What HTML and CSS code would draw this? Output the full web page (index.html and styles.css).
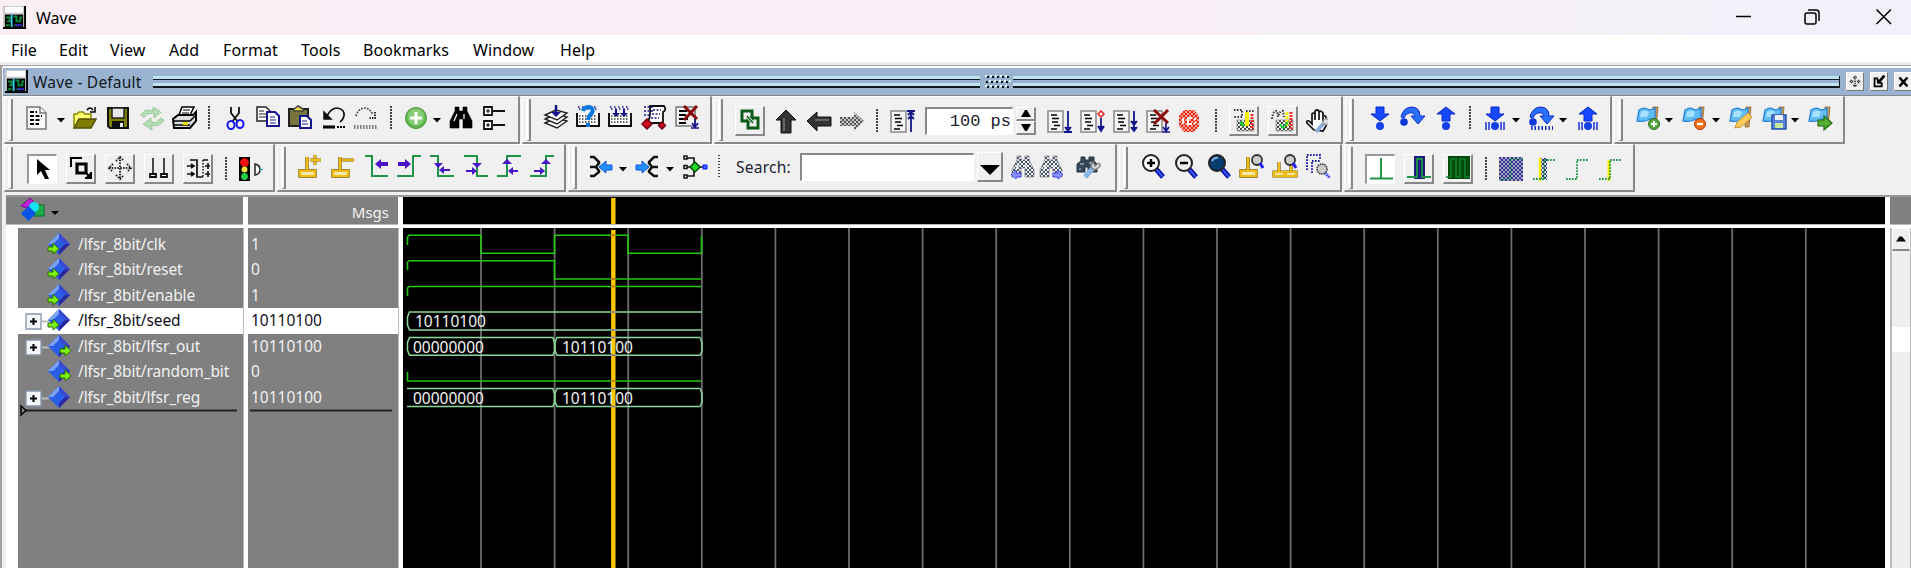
FILE: index.html
```html
<!DOCTYPE html>
<html lang="en">
<head>
<meta charset="utf-8">
<title>Wave</title>
<link rel="stylesheet" href="styles.css">
</head>
<body>
<div class="window">
  <header class="titlebar">
    <svg class="app-icon" viewBox="0 0 24 24"><rect width="24" height="24" fill="#000"/><path d="M0 0H22V22H0z" fill="#c8c8c8"/><path d="M2 1H21V7H2z" fill="#fff"/><path d="M2 9H21V22H2z" fill="#000"/><path d="M3 12H7V16H4M11 11H14V16H18V12H20M3 20H7M12 20H15" fill="none" stroke="#0a8a3c" stroke-width="2"/><path d="M9 9V22" stroke="#37c8e8" stroke-width="2"/><path d="M13 20H20" stroke="#3a2ad0" stroke-width="2"/></svg>
    <span class="title">Wave</span>
    <svg class="win-controls" viewBox="0 0 164 20"><g fill="none" stroke="#000" stroke-width="1.5"><path d="M0 10.5H15"/><rect x="69" y="7" width="11" height="11" rx="2"/><path d="M72 4H80Q83 4 83 7V15"/><path d="M140.500 3.500L155 18M155 3.500L140.500 18"/></g></svg>
  </header>
  <nav class="menu">
    <span class="m-file">File</span><span class="m-edit">Edit</span><span class="m-view">View</span><span class="m-add">Add</span><span class="m-format">Format</span><span class="m-tools">Tools</span><span class="m-book">Bookmarks</span><span class="m-window">Window</span><span class="m-help">Help</span>
  </nav>
  <section class="pane">
    <div class="pane-title">
      <svg class="app-icon" viewBox="0 0 24 24"><rect width="24" height="24" fill="#000"/><path d="M0 0H22V22H0z" fill="#c8c8c8"/><path d="M2 1H21V7H2z" fill="#fff"/><path d="M2 9H21V22H2z" fill="#000"/><path d="M3 12H7V16H4M11 11H14V16H18V12H20M3 20H7M12 20H15" fill="none" stroke="#0a8a3c" stroke-width="2"/><path d="M9 9V22" stroke="#37c8e8" stroke-width="2"/><path d="M13 20H20" stroke="#3a2ad0" stroke-width="2"/></svg>
      <span class="pane-name">Wave - Default</span>
      <div class="rails rails-left"></div>
      <svg class="dots" viewBox="0 0 33 14"><defs><pattern id="dt" width="5" height="5" patternUnits="userSpaceOnUse"><path d="M0 0h2v2h-2z" fill="#dff"/><path d="M2 1h2v2h-2z" fill="#111"/></pattern></defs><path d="M4 0H29V4H4zM4 10H29V14H4z" fill="url(#dt)"/><path d="M2 0H27V4H2z" fill="url(#dt)" transform="translate(4 5)"/></svg>
      <div class="rails rails-right"></div>
      <svg class="pbtn" viewBox="0 0 18 19"><path d="M9 3V16M3 9.500H15M7 5H11M7 14H11M5 7.500V11.500M13 7.500V11.500" stroke="#222" stroke-width="1.500" stroke-dasharray="1.500 1.200"/></svg>
      <svg class="pbtn" viewBox="0 0 18 19"><path d="M8 6H4V15H12V11" fill="none" stroke="#000" stroke-width="2"/><path d="M15 3L9 10" stroke="#000" stroke-width="3"/><path d="M6 5L7 12L14 12z"/></svg>
      <svg class="pbtn" viewBox="0 0 18 19"><path d="M5 5L14 15M14 5L5 15" stroke="#000" stroke-width="2.800"/></svg>
    </div>
    <div class="toolrow" id="row1"></div>
    <div class="toolrow" id="row2"></div>
    <div class="wave">
      <div class="col names">
        <div class="head"><svg class="shapes" viewBox="0 0 40 26"><path d="M1 9L10 1L15 6L7 11z" fill="#c020d8" stroke="#701080"/><path d="M15 8H24V19H13z" fill="#1fae4c" stroke="#087028"/><circle cx="14" cy="10" r="5" fill="#12e2f4"/><path d="M8.500 9L16 16.500L8.500 24L1 16.500z" fill="#0a52e8"/><path d="M31 14H39L35 18z"/></svg></div>
        <div class="list" id="names"></div>
      </div>
      <div class="col values">
        <div class="head msgs">Msgs</div>
        <div class="list" id="values"></div>
      </div>
      <div class="col plot">
        <div class="head black"><svg viewBox="0 0 1482 27" class="cursor-head"><path d="M210.300 1V27" stroke="#ffc800" stroke-width="4.400"/></svg></div>
        <svg class="canvas" id="canvas" viewBox="403 228 1482 340"></svg>
      </div>
      <div class="col scroll">
        <div class="head"></div>
        <div class="track"><div class="up"><svg viewBox="0 0 10 6"><path d="M0 5.500L3.500 0.500H6L10 5.500z"/></svg></div><div class="slot"></div></div>
      </div>
    </div>
  </section>
</div>
<script src="app.js"></script>
</body>
</html>
```

FILE: styles.css
```css
* { box-sizing: border-box; }
body { margin: 0; overflow: hidden; background: #fff; font-family: "Noto Sans", "Open Sans", sans-serif; }
svg { display: block; flex: none; }
.window { width: 1911px; height: 568px; display: flex; flex-direction: column; overflow: hidden; }

.titlebar { height: 35px; flex: none; display: flex; align-items: center; padding-left: 3px; background: linear-gradient(90deg, #f9eff5 0, #f9eef5 55%, #f1f1fa 100%); }
.app-icon { width: 23px; height: 23px; }
.title { margin-left: 10px; font-size: 16px; line-height: 36px; }
.win-controls { width: 164px; height: 20px; margin-left: auto; margin-right: 11px; margin-bottom: 3px; }

.menu { height: 27px; flex: none; display: flex; padding-left: 11px; font-size: 16px; letter-spacing: 0.1px; line-height: 31px; white-space: nowrap; }
.m-file { width: 48px; } .m-edit { width: 51px; } .m-view { width: 59px; } .m-add { width: 54px; }
.m-format { width: 78px; } .m-tools { width: 62px; } .m-book { width: 110px; } .m-window { width: 87px; }

.pane { flex: 1; display: flex; flex-direction: column; min-height: 0; padding-left: 3px; border-top: 3px solid #eee; background: #f0f0f0; box-shadow: inset 2px 2px 0 #a0a0a0; }
.pane-title { height: 30px; flex: none; margin-top: 1px; display: flex; align-items: center; background: #99b3d1; border-top: 2px solid #fff; border-bottom: 1px solid #888; padding: 0 0 0 2px; overflow: hidden; }
.pane-name { margin-left: 5px; width: 120px; flex: none; font-size: 15.500px; letter-spacing: 0.2px; line-height: 24px; color: #101820; white-space: nowrap; }
.rails { height: 12px; flex: none; background: linear-gradient(#bfe3f0 0 3px, #101820 3px 4.500px, transparent 4.500px 7.500px, #bfe3f0 7.500px 10.500px, #101820 10.500px 12px); border-right: 1px solid #101820; }
.rails-left { width: 827px; border-right: 0; }
.rails-right { width: 827px; margin-right: 6px; }
.dots { width: 33px; height: 14px; }
.pbtn { width: 18px; height: 19px; background: #f0f0f0; border-right: 1px solid #777; border-bottom: 1px solid #777; border-top: 1px solid #fff; border-left: 1px solid #fff; margin-right: 6px; }

.toolrow { height: 48px; flex: none; display: flex; gap: 2px; padding-left: 1px; }
.toolbar { height: 48px; display: flex; align-items: center; flex: none; border: 1px solid #fff; border-right: 2px solid #888; border-bottom: 2px solid #888; }
.grip { width: 5px; height: 42px; flex: none; margin-left: 3px; border-left: 2px solid #fff; border-right: 2px solid #888; border-bottom: 1px solid #888; }
.cell { flex: none; display: flex; align-items: center; justify-content: center; }
.cell svg { width: 24px; height: 24px; }
.cell.menu-arrow svg { width: 8px; height: 24px; }
.cell.sep { height: 24px; background: repeating-linear-gradient(#444 0 1.500px, transparent 1.500px 3px); }
.cell.raised { height: 30px; border: 1px solid #fff; border-right: 2px solid #888; border-bottom: 2px solid #888; }
.cell.pressed { height: 30px; background: #fff; border: 1px solid #fff; border-top: 2px solid #999; border-left: 2px solid #999; }
.cell.field { height: 28px; background: #fff; border: 1px solid #fff; border-top: 2px solid #888; border-left: 2px solid #888; justify-content: flex-end; padding-right: 1px; font-family: "Liberation Mono", monospace; font-size: 17px; color: #223; }
.cell.label { font-size: 15.500px; letter-spacing: 0.25px; color: #223; justify-content: flex-start; }
.cell.spin { height: 28px; flex-direction: column; }
.cell.spin i { width: 100%; height: 14px; display: flex; align-items: center; justify-content: center; border: 1px solid #fff; border-right: 2px solid #888; border-bottom: 2px solid #888; }
.cell.spin svg { width: 12px; height: 9px; }

.wave { flex: 1; min-height: 0; display: flex; margin: 3px 0 0 3px; border-top: 2px solid #999; background: #fff; }
.col { display: flex; flex-direction: column; flex: none; }
.head { height: 27px; flex: none; background: #808080; margin-bottom: 4px; box-shadow: 0 1px 0 #bbb; }
.names { width: 237px; margin-right: 5px; }
.values { width: 150px; margin-right: 5px; }
.plot { width: 1482px; margin-right: 5px; }
.scroll { width: 21px; }
.names .list { margin-left: 12px; }
.list { flex: 1; background: #808080; padding-top: 3.500px; box-shadow: 1px 0 0 #bbb; }
.shapes { width: 40px; height: 26px; margin-left: 14px; }
.msgs { color: #f4f4f4; font-size: 15px; text-align: right; padding-right: 9px; line-height: 31px; }
.sig { height: 25.500px; display: flex; align-items: center; color: #f0f0f0; font-size: 15.500px; line-height: 24px; white-space: nowrap; }
.sig span { margin-left: 7px; letter-spacing: -0.1px; margin-top: -1px; }
.sig svg { width: 46px; height: 25px; margin-left: 7px; }
.values .sig span { margin-left: 3px; letter-spacing: 0; }
.sig.on { background: #fff; color: #101020; }
.endline { height: 8px; }
.endline svg { height: 8px; width: 220px; }
.values .endline svg { width: 150px; }
.black { background: #000; }
.cursor-head { width: 1482px; height: 27px; }
.canvas { width: 1482px; height: 340px; background: #000; }
.canvas text { font: 15.500px "Noto Sans", sans-serif; fill: #f0f4f0; }
.track { flex: 1; background: #efefef; border-left: 2px solid #bbb; border-right: 1px solid #bbb; }
.up { height: 23px; display: flex; align-items: center; justify-content: center; border: 1px solid #fff; border-bottom: 2px solid #888; }
.up svg { width: 10px; height: 6px; }
.slot { height: 25px; margin-top: 76px; background: #fff; }
```

FILE: app.js
```javascript
const P = (d, fill = 'none', stroke = 'none', w = 1.5, extra = '') =>
  `<path d="${d}" fill="${fill}" stroke="${stroke}" stroke-width="${w}" ${extra}/>`;
const NAVY = '#14148c', GREEN = '#1e9448', VIOLET = '#4a14c8', GOLD = '#f0bc10';
const docBase = P('M1 2H16V23H1z', '#f6f6f6', '#888') + P('M4 6H10M5 9.500H12M5 13H11M7 16.500H13M4 20H10', 'none', '#000', 1.7);
const checker = c => `<pattern id="ck${c.slice(1)}" width="4" height="4" patternUnits="userSpaceOnUse"><path d="M0 0h2v2h-2zM2 2h2v2h-2z" fill="${c}"/></pattern>`;
const ck = c => `url(#ck${c.slice(1)})`;
const flag = P('M17 1L22 1L20 21H16z', '#c89858', '#8a6230', .8) +
  P('M3 4Q8 1 11 3T19 2V14Q15 12 12 14T1 15z', '#62bdf5', '#2a86d8', 1.3) + P('M5 6Q9 3 13 6L11 11H4z', '#a8e0ff');
const pin = (x, y) => P(`M${x} ${y}v14M${x - 7} ${y + 14}h15v5h-15z`, 'none', '#806000', 3.4) + P(`M${x} ${y}v14M${x - 7} ${y + 14}h15v5h-15z`, '#f4e8b0', GOLD, 2.2);
const blueDown = P('M8 1H16V8H21L12 15L3 8H8z', '#1648ff', '#0a28c8', 1);
const blueUp = P('M8 15H16V8H21L12 1L3 8H8z', '#1648ff', '#0a28c8', 1);
const curve = P('M1 11Q3 2 11 1Q20 1 20 10H25L18 18L11 10H15Q14 6 9 7Q5 8 4 12z', '#2a70ff', '#0a28c8', 1) + '<circle cx="4" cy="16" r="3.800" fill="#0a38d8"/>';
const bars = P('M3 16V24M6 16V24M18 16V24M21 16V24', 'none', '#1430d8', 1.5);
const ball = '<circle cx="12" cy="20" r="4" fill="#1640e8"/>';
const glass = (f, s) => P('M15 15L22 23', 'none', '#0a0aa0', 5) + P('M15 15L22 23', 'none', '#3858f0', 2) +
  `<circle cx="10" cy="9" r="8" fill="${f}" stroke="#222" stroke-width="2"/>` + s;
const binoc = (f, s = f) => P('M6 1H10V5H14V1H18V5L23 15V22H14V13H10V22H1V15L6 5z', f, s, .6) + P('M8 8L5 15M15 8V13', 'none', '#fff', 1.2);
const left = (x, y) => P(`M${x} ${y}l6 -5v3h7v4h-7v3z`, VIOLET);
const right = (x, y) => P(`M${x} ${y}l-6 -5v3h-7v4h7v3z`, VIOLET);

const icons = {
  doc: P('M2 1H15L21 7V23H2z', '#f8f8f8', '#777') + P('M15 1V7H21', '#fff', '#777') + P('M5 6H12M5 10H17M5 14H16M5 18H14', 'none', '#000', 2, 'stroke-dasharray="4 1.500"'),
  open: P('M1 21V8H4L6 6H10L12 8H18V12', '#ffff70', '#888800') + P('M1 22L6 13H23L18 22z', '#808000', '#504c00') + P('M14 4Q17 0 20 4M22 1V6H17', 'none', '#000'),
  save: P('M2 2H22V22H4L2 20z', '#808000', '#111', 2) + P('M6 2H18V12H6z', '#e8e8e8', '#222') + P('M6 15H18V22H6z', '#111') + P('M14 17H17V21H14z', '#eee'),
  refresh: P('M1 9Q5 2 13 5V1L21 6L14 12V8Q7 6 4 12zM24 14Q19 22 12 19V24L3 18L11 12V16Q17 18 20 12z', '#b4dcb4', '#80b880', 1, 'stroke-dasharray="1.500 1"'),
  print: P('M7 9L10 1H22L18 9', '#fff', '#000') + P('M11 4H18M10 7H17', 'none', '#000', 1) + P('M1 13L6 9H21L24 6V15L18 22H2z', '#ddd', '#000', 2) + P('M1 15H18L23 10M2 19H18', 'none', '#000', 1.500) + P('M11 16H16V19H11z', '#f0e000'),
  cut: P('M8 1V7L15 16M16 1V7L9 16', 'none', '#111', 1.8) + '<g fill="none" stroke="#1414f8" stroke-width="2"><ellipse cx="8" cy="19" rx="3.500" ry="4"/><ellipse cx="17" cy="18" rx="3.500" ry="4"/></g>',
  copy: P('M1 1H10L14 5V15H1z', '#fff', '#222') + P('M3 5H8M3 8H10M3 11H10', 'none', '#222', 1) + P('M11 6H19L23 10V20H11z', '#fff', '#14148c', 2) + P('M14 11H19M14 14H20M14 17H20', 'none', NAVY, 1),
  paste: P('M1 3H20V20H1z', '#77743c', '#222', 2) + P('M6 5V3L10 0L15 3V5z', '#eee040', '#444') + P('M12 10H19L23 14V22H12z', '#fff', NAVY, 2) + P('M14 15H19M14 18H20', 'none', NAVY, 1),
  undo: P('M5 10Q9 2 15 2Q23 3 22 10Q21 14 18 16', 'none', '#111', 1.7) + P('M2 6V13H9z', '#111', '#111') + P('M1 21H13', 'none', '#000', 3) + P('M15 21H23', 'none', '#000', 2, 'stroke-dasharray="2 1"'),
  redo: P('M2 10Q4 3 10 2Q16 2 19 9', 'none', '#333', 1.7, 'stroke-dasharray="1.500 1.500"') + P('M21 6V12H15', 'none', '#333', 2, 'stroke-dasharray="1.500 1"') + P('M0 20H24M0 22H24', 'none', '#555', 1.300, 'stroke-dasharray="1.500 1.500"'),
  add: '<circle cx="12" cy="12" r="10.500" fill="#62b450" stroke="#489838"/><circle cx="12" cy="11" r="8.500" fill="#84cc70"/>' + P('M12 6V18M6 12H18', 'none', '#fff', 3),
  find: binoc('#000'),
  tree: P('M2 1H10V9H2zM2 15H10V23H2zM11 5H23M11 19H23', '#fff', '#111', 1.8) + P('M4 5H8M6 3V7M4 19H8M6 17V21', 'none', '#111', 1.200),
  stack: [18, 14, 10].map(y => P(`M1 ${y}L12 ${y - 5}L23 ${y - 2}L13 ${y + 5}z`, '#fff', '#222', 1.4)).join('') + P('M12 0V8', 'none', NAVY, 2.5) + P('M7 7H17L12 12z', NAVY),
  cal: P('M1 8V21H23V8', '#fff', '#111', 2) + P('M3 11H21M3 14H21M3 17H21', 'none', '#333', 1.3, 'stroke-dasharray="1.500 1.500"') + P('M2 2H22M3 4H22', 'none', NAVY, 1.4, 'stroke-dasharray="1.500 2.500"') + P('M8 4V10M16 4V10', 'none', NAVY, 2) + P('M4 8H12L8 12zM12 8H20L16 12z', NAVY),
  calq: P('M1 8V21H23V8', '#fff', '#111', 2) + P('M3 11H21M3 14H21M3 17H21', 'none', '#333', 1.3, 'stroke-dasharray="1.500 1.500"') + P('M2 2H22M3 4H22', 'none', NAVY, 1.4, 'stroke-dasharray="1.500 2.500"') + P('M7 6Q8 2 13 2Q18 3 16 8Q13 10 12 15M12 18V22', 'none', '#0878e0', 4),
  script: P('M8 1H22Q25 5 21 7V18H5Q9 14 8 1z', '#fff', '#111', 1.800) + P('M2 2H12M2 6H12M2 10H9M11 5H19M10 9H18M9 13H17', 'none', NAVY, 1.300, 'stroke-dasharray="2 1.500"') + P('M5 14L10 19L5 24L0 19zM20 17L23.500 20.500L20 24L16.500 20.500z', '#d80a20', '#700010'),
  kill1: P('M1 2H20V21H1z', '#f4f4f4', '#777') + P('M4 6H12M4 10H11M4 14H13M4 18H11', 'none', '#000', 1.8) + P('M9 1L22 14M22 1L9 15', 'none', '#8a0a0a', 3) + P('M20 14V22M16 23H24M17 18L20 22L23 18', 'none', NAVY, 1.7),
  docup: docBase + P('M21 2V23M17 2H25M18 6L21 3L24 6M18 10L21 7L24 10', 'none', NAVY, 1.8),
  docdn: docBase + P('M21 2V22M17 23H25M18 18L21 22L24 18', NAVY, NAVY, 1.8),
  docdia: docBase + P('M21 9V20M18 17L21 22L24 17', NAVY, NAVY, 1.8) + P('M21 2L24 5L21 8L18 5z', '#fff', '#f02020'),
  docdn2: docBase + P('M21 2V22M18 12L21 16L24 12M18 18L21 22L24 18', NAVY, NAVY, 1.8),
  kill2: docBase + P('M8 1L22 14M22 1L8 15', 'none', '#8a0a0a', 3) + P('M20 14V22M16 23H24M17 18L20 22L23 18', 'none', NAVY, 1.7),
  stop: P('M7 1H17L22 7V17L17 23H7L2 17V7z', '#f4a898') + P('M7 1H17L22 7V17L17 23H7L2 17V7z', ck('#e82010')) + P('M6 9V15M15 9H11V15H15M18 9V11M18 13V15', 'none', '#fff', 2),
  link: P('M4 3H14V13H4zM10 10H20V20H10z', 'none', '#0a5a18', 3) + P('M9 8L15 15', 'none', '#fff', 3) + P('M9 8L15 15', 'none', '#0a5a18', 1.500),
  bup: P('M12 1L22 11H17V24H7V11H2z', '#333', '#111', 1) + P('M10 9V22', 'none', '#666', 2),
  bleft: P('M0 12L10 3V8H24V17H10V22z', '#333', '#111', 1) + P('M8 11H22', 'none', '#666', 2),
  bright: P('M24 12L14 3V8H0V17H14V22z', ck('#444444')) + P('M24 12L14 3V8H0V17H14V22z', '#777', 'none', 1, 'fill-opacity=".35"'),
  seg1: P('M2 2H10V9H2M14 3H22', 'none', '#333', 2, 'stroke-dasharray="1.500 1.500"') + P('M5 12H22V23H5z', ck('#444444'), '#999', .8) + P('M15 4V18', 'none', '#f8f000', 4) + P('M20 6V22', 'none', '#f83030', 3, 'stroke-dasharray="2 1"') + P('M8 14L12 18', 'none', '#20d040', 3),
  seg2: P('M1 11Q2 2 6 3L7 9Q9 2 12 3L13 9', 'none', '#333', 2, 'stroke-dasharray="1.500 1.500"') + P('M5 12H22V23H5z', ck('#444444'), '#999', .8) + P('M16 4V18', 'none', '#f8f000', 3, 'stroke-dasharray="3 1"') + P('M20 4V22', 'none', '#f83030', 3, 'stroke-dasharray="2 1"') + P('M9 16L12 20L17 14', 'none', '#20d040', 2),
  hand: P('M8 21L1 14Q0 11 3 12L6 15V5Q7 3 9 5V11V2Q11 0 13 2V11V3Q15 1 17 4V12V7Q20 6 20 9V17L17 22z', '#fff', '#111', 1.700) + P('M10 23L18 14', 'none', '#8ab0dc', 4) + P('M22 10Q17 9 17 14Q19 17 22 15', '#ddd', '#999'),
  into: blueDown + ball, over: curve, out: blueUp + ball,
  intob: blueDown + ball + bars, overb: curve + P('M2 22H24', 'none', '#1430d8', 4, 'stroke-dasharray="1.500 2"'), outb: blueUp + ball + bars,
  fadd: flag + '<circle cx="18" cy="18" r="5.500" fill="#58a840" stroke="#2a701c"/>' + P('M18 15V21M15 18H21', 'none', '#fff', 2),
  fdel: flag + '<circle cx="18" cy="18" r="5.500" fill="#f07020" stroke="#b83800"/>' + P('M15 18H21', 'none', '#fff', 2.2),
  fedit: flag + P('M6 22L8 16L19 7L23 11L12 21z', '#ffcc58', '#c89038', 1),
  fsave: flag + P('M10 9H24V23H10z', '#5a84dc', '#2850a8') + P('M13 9H21V14H13z', '#eef') + P('M13 17H21V22H13z', '#c8e8a0'),
  fgo: flag + P('M10 14H16V10L24 17L16 24V20H10z', '#58b038', '#246c10', 1.200),

  arrow: P('M6 2V18L10 14L14 22H18L14 13H19z', '#000'),
  zoomsel: P('M2 11V2H13', 'none', '#000', 2) + P('M8 8H17V17H8z', 'none', '#000', 3.200) + P('M16 16L22 22M16 22H22V16', '#000', '#000', 2),
  pan: P('M12 1V23M1 12H23M8 5L12 1L16 5M8 19L12 23L16 19M5 8L1 12L5 16M19 8L23 12L19 16', 'none', '#222', 2, 'stroke-dasharray="1.500 1.300"'),
  two: P('M6 2V18M17 2V18', 'none', '#111', 1.5) + P('M3 18H9V21H3zM14 18H20V21H14z', '#fff', '#111', 1.800),
  edge: P('M4 4H11V21H17M17 4H22', 'none', '#111', 1.7) + P('M17 4V21', 'none', '#111', 1.500, 'stroke-dasharray="1.500 1.500"') + P('M1 10H8M1 18H8M19 10H24M19 18H24M5 8L8 10L5 12M5 16L8 18L5 20M22 7V13M22 15V21', 'none', '#111', 1.600),
  light: P('M1 0H12V24H1z', '#000') + '<circle cx="6.500" cy="5.500" r="4.400" fill="#f01010"/><circle cx="6.500" cy="12.500" r="3" fill="#f0e040"/><circle cx="6.500" cy="19.500" r="3.400" fill="#20d048"/>' + P('M17 7V18Q22 17 22 12.500T17 7z', '#fff', '#222', 1.500) + P('M22 12.500H25', 'none', '#28b8e8', 1.500),
  pinadd: pin(9, 3) + P('M17 1V11M12 6H23', 'none', '#806000', 3) + P('M17 1V11M12 6H23', 'none', GOLD, 1.8),
  pindel: pin(9, 3) + P('M11 6H23', 'none', '#806000', 3) + P('M11 6H23', 'none', GOLD, 1.8),
  e1: P('M0 2H7V22H23', 'none', GREEN, 2) + left(10, 10),
  e2: P('M0 22H16V2H24', 'none', GREEN, 2) + right(14, 10),
  e3: P('M0 2H8V22H24', 'none', GREEN, 2) + P('M4 9H13L8 14z', VIOLET) + P('M9 16L14 12V15H20V17H14V20z', VIOLET),
  e4: P('M0 2H13V22H24', 'none', GREEN, 2) + P('M8 9H18L13 14z', VIOLET) + P('M13 17L8 13V16H2V18H8V21z', VIOLET),
  e5: P('M0 22H10V2H24', 'none', GREEN, 2) + P('M5 10H15L10 5z', VIOLET) + P('M11 17L16 13V16H21V18H16V21z', VIOLET),
  e6: P('M0 22H16V2H24', 'none', GREEN, 2) + P('M11 10H21L16 5z', VIOLET) + P('M15 17L10 13V16H4V18H10V21z', VIOLET),
  j1: P('M1 2H5L10 7V8L7 12L10 16V17L5 21H1M1 12H7', 'none', '#111', 2.6) + P('M10 12L17 6V10H23V15H17V18z', '#2090ff', '#1050e0', 1),
  j2: P('M23 2H19L14 7V8L17 12L14 16V17L19 21H23M17 12H23', 'none', '#111', 2.6) + P('M14 12L7 6V10H1V15H7V18z', '#2090ff', '#1050e0', 1),
  j3: P('M4 3H11V21H4M4 12H22', 'none', '#111', 1.600) + P('M1 1H4V4H1zM1 10.500H4V13.500H1zM1 20H4V23H1z', '#fff', '#111', 1.500) + P('M12 7L17 12L12 17L7 12z', '#20d828', '#064a08', 1.500) + P('M20.500 10.500H23.500V13.500H20.500z', '#fff', '#1030ff', 2),
  sprev: binoc(ck('#445566'), '#667') + P('M0 20L5 15V18H10V22H5V24z', '#8890ff', '#2020f8', 1, 'stroke-dasharray="1.500 1"'),
  snext: binoc(ck('#445566'), '#667') + P('M24 20L19 15V18H14V22H19V24z', '#8890ff', '#2020f8', 1, 'stroke-dasharray="1.500 1"'),
  sopt: P('M5 2H9V5H13V2H18V6L21 9V17H12V12H9V17H1V9L5 6z', '#364858', '#24303c', 1) + P('M4 9H8M13 8H17M4 13V15', 'none', '#9ab', 1.300) + P('M9 22L18 12', 'none', '#88b4e8', 5) + P('M23 8L19 11L17 7Q14 10 16 13T22 13T23 8', '#ddd', '#888'),
  zin: glass('#fff', P('M10 5V13M6 9H14', 'none', '#000', 2.5)),
  zout: glass('#eee', P('M6 9H14', 'none', '#000', 2.500)),
  zfull: glass('#083c70', P('M5 7Q7 3 11 4', 'none', '#80b0e0', 2)),
  zcur: pin(8, 3) + '<circle cx="17" cy="6" r="5" fill="#ccc" stroke="#333" stroke-width="1.800"/>' + P('M20 9L23 14', 'none', '#2020f0', 3),
  zcur2: P('M6 8V18M1 18H11V22H1zM18 8V18M13 18H23V22H13z', '#f4e8b0', '#806000', 3.200) + P('M6 8V18M1 18H11V22H1zM18 8V18M13 18H23V22H13z', '#f4e8b0', GOLD, 2) + '<circle cx="17" cy="6" r="5" fill="#ccc" stroke="#333" stroke-width="1.800"/>' + P('M20 9L23 14', 'none', '#2020f0', 3),
  zarea: P('M1 16V1H14V6M6 19V7H14', 'none', '#2828a8', 2, 'stroke-dasharray="1.700 1.300"') + '<circle cx="16" cy="15" r="5" fill="#ccc" stroke="#333" stroke-width="1.500" stroke-dasharray="1.500 .8"/>' + P('M19 19L24 24', 'none', '#3838f0', 3, 'stroke-dasharray="1.500 .8"'),
  w1: P('M12 1V21M1 21.500H24', 'none', GREEN, 2),
  w2: P('M7 0H18V23H7z', '#1c1c80') + P('M0 21H10V3H15V21H24', 'none', GREEN, 1.800),
  w3: P('M2 0H24V23H2z', '#034a06') + P('M0 21H5V3H10V21H14V3H19V21H24', 'none', '#128030', 1.600),
  w4: P('M0 0H24V24H0z', '#a8a8cc') + P('M0 0H24V24H0z', ck('#303088')) + P('M1 22H12V2H24', 'none', GREEN, 1.600, 'stroke-dasharray="1.500 1.500"'),
  w5: P('M8 1H15V23H8z', ck('#303088')) + P('M8 1V24', 'none', '#f8f000', 2.500) + P('M1 22H12V3H24', 'none', GREEN, 1.800, 'stroke-dasharray="1.700 1.300"'),
  w6: P('M1 22H12V3H24', 'none', GREEN, 1.800, 'stroke-dasharray="1.700 1.300"'),
  w7: P('M11 3V24', 'none', '#f8f000', 3) + P('M1 22H12V3H24', 'none', GREEN, 1.800, 'stroke-dasharray="1.700 1.300"'),
};

/* Each toolbar: [left, right, vertical nudge, items]; item: [center, icon or kind, frame] */
const row1 = [
  [4, 520, -2, [[37, 'doc'], [61, '>'], [85, 'open'], [118, 'save'], [152, 'refresh'], [184, 'print'], [209, '|'], [235, 'cut'], [268, 'copy'], [300, 'paste'], [334, 'undo'], [366, 'redo'], [391, '|'], [416, 'add'], [437, '>'], [461, 'find'], [494, 'tree']]],
  [522, 712, -3, [[556, 'stack'], [588, 'calq'], [620, 'cal'], [654, 'script'], [687, 'kill1']]],
  [714, 1343, 1, [[750, 'link', 'raised'], [786, 'bup'], [819, 'bleft'], [852, 'bright'], [877, '|'], [902, 'docup'], [969, 'field', 88, '100 ps'], [1026, 'spin'], [1059, 'docdn'], [1092, 'docdia'], [1125, 'docdn2'], [1158, 'kill2'], [1189, 'stop'], [1216, '|'], [1244, 'seg1', 'raised'], [1283, 'seg2', 'raised'], [1318, 'hand']]],
  [1345, 1612, -2, [[1380, 'into'], [1412, 'over'], [1446, 'out'], [1470, '|'], [1495, 'intob'], [1516, '>'], [1541, 'overb'], [1563, '>'], [1588, 'outb']]],
  [1614, 1845, -2, [[1648, 'fadd'], [1669, '>'], [1694, 'fdel'], [1716, '>'], [1741, 'fedit'], [1774, 'fsave'], [1795, '>'], [1820, 'fgo']]],
];
const row2 = [
  [4, 275, 1, [[42, 'arrow', 'pressed'], [81, 'zoomsel', 'raised'], [120, 'pan', 'raised'], [159, 'two', 'raised'], [198, 'edge', 'raised'], [226, '|'], [250, 'light']]],
  [277, 566, -2, [[310, 'pinadd'], [343, 'pindel'], [377, 'e1'], [409, 'e2'], [442, 'e3'], [476, 'e4'], [509, 'e5'], [542, 'e6']]],
  [568, 1117, -1, [[601, 'j1'], [623, '>'], [647, 'j2'], [670, '>'], [695, 'j3'], [719, '|'], [766, 'label', 60, 'Search:'], [887, 'field', 174, ''], [990, 'drop'], [1023, 'sprev'], [1051, 'snext'], [1088, 'sopt']]],
  [1119, 1342, -2, [[1153, 'zin'], [1186, 'zout'], [1219, 'zfull'], [1252, 'zcur'], [1285, 'zcur2'], [1318, 'zarea']]],
  [1344, 1635, 1, [[1380, 'w1', 'pressed'], [1419, 'w2', 'raised'], [1458, 'w3', 'raised'], [1486, '|'], [1511, 'w4'], [1544, 'w5'], [1577, 'w6'], [1610, 'w7']]],
];
const svg = (body, box = '0 0 24 24') => `<svg viewBox="${box}" overflow="visible">${body}</svg>`;
function cell([cx, kind, a, text]) {
  if (kind === '>') return [8, 'menu-arrow', svg(P('M0 12H8L4 16.500z', '#000'), '0 0 8 24')];
  if (kind === '|') return [2, 'sep', ''];
  if (kind === 'field' || kind === 'label') return [a, kind, text];
  if (kind === 'spin') return [20, 'spin', `<i>${svg(P('M1 8L5 1H7L11 8z', '#000'), '0 0 12 9')}</i><i>${svg(P('M1 1L5 8H7L11 1z', '#000'), '0 0 12 9')}</i>`];
  if (kind === 'drop') return [26, 'raised', svg(P('M2 11H22L12 21z', '#000'))];
  return [a ? 30 : 24, a || '', svg(icons[kind])];
}
const build = row => row.map(([x0, x1, dy, items]) => {
  let end = x0 + 9;
  const cells = items.map(it => {
    const [w, cls, body] = cell(it);
    const gap = it[0] - w / 2 - end;
    end += gap + w;
    return `<div class="cell ${cls}" style="width:${w}px;margin-left:${gap}px;translate:0 ${dy}px">${body}</div>`;
  }).join('');
  return `<div class="toolbar" style="width:${x1 - x0}px"><div class="grip"></div>${cells}</div>`;
}).join('');
document.getElementById('row1').innerHTML = build(row1);
document.getElementById('row2').innerHTML = build(row2);
document.querySelector('.dots defs').innerHTML += ['#e82010', '#444444', '#445566', '#303088'].map(checker).join('');

const signals = [
  ['/lfsr_8bit/clk', '1', 'in'], ['/lfsr_8bit/reset', '0', 'in'], ['/lfsr_8bit/enable', '1', 'in'],
  ['/lfsr_8bit/seed', '10110100', 'in', 1], ['/lfsr_8bit/lfsr_out', '10110100', 'out', 1],
  ['/lfsr_8bit/random_bit', '0', 'out'], ['/lfsr_8bit/lfsr_reg', '10110100', '', 1],
];
const gem = (dir, bus) => svg(
  (bus ? P('M1 6H16V21H1z', '#f4f6fa', '#8894a8', 1.300) + P('M5 13.500H12M8.500 10V17', 'none', '#000', 2) + P('M17 13.500H24', 'none', '#bbb', 2) : '') +
  P('M34 1L45 12L34 23L23 12z', '#2a5ee8') + P('M34 1L23 12H28L34 6z', '#7aa2f4') + P('M45 12L34 23V18L40 12z', '#2828a0') + P('M34 1L45 12H40L34 6z', '#3848d0') +
  (dir ? P(dir === 'in' ? 'M23 15H28V11L34 17L28 22V19H23z' : 'M35 15H40V11L46 17L40 22V19H35z', '#7cf010', '#2a7000', 1) : ''), '0 0 46 25');
document.getElementById('names').innerHTML = signals.map(([n, , d, b], i) =>
  `<div class="sig ${i === 3 ? 'on' : ''}">${gem(d, b)}<span>${n}</span></div>`).join('') +
  `<div class="endline">${svg(P('M8 .5H219', 'none', '#222', 2) + P('M3 -4L8 .5L3 5z', '#888', '#000', 1.500), '0 0 220 8')}</div>`;
document.getElementById('values').innerHTML = signals.map(([, v], i) =>
  `<div class="sig ${i === 3 ? 'on' : ''}"><span>${v}</span></div>`).join('') +
  `<div class="endline">${svg(P('M2 .5H144', 'none', '#222', 2), '0 0 150 8')}</div>`;

let c = '';
for (let i = 0; i < 19; i++) c += P(`M${481 + i * 73.6} 228V568`, 'none', '#6c6c6c', 1.8);
c += P('M613.300 230V568', 'none', '#ffc800', 4.400);
c += P('M407.500 245V237L409 235.300H481V253.300H554.500V235.300H628V253.300H701.500V236M407.500 270V262L409 260.700H554.500V279H701.500M407.500 296V288L409 286.500H701.500M407.500 372V381H701.500', 'none', '#22c810', 1.6);
const bus = (x1, x2, t, b) => P(`M${x2} ${t}H${x1 + 2}L${x1} ${t + 5}V${b - 5}L${x1 + 2} ${b}H${x2}`, 'none', '#8cd89a', 1.5);
c += bus(407.5, 701.5, 312, 330);
c += bus(407.5, 553.5, 337.5, 355.3) + bus(555, 700.5, 337.5, 355.3);
c += P('M407 388.500H553.500M407 406.500H553.500', 'none', '#8cd89a') + bus(555, 700.5, 388.5, 406.5);
c += P('M700.500 338L702 343V351L700.500 355M700.500 389L702 394V402L700.500 406', 'none', '#8cd89a');
c += P('M553 338L554.500 343V351L553 355M553 389L554.500 394V402L553 406', 'none', '#8cd89a');
c += [[415, 327], [413, 352.5], [562, 352.5], [413, 403.7], [562, 403.7]].map(([x, y], i) =>
  `<text x="${x}" y="${y}">${i % 2 && i < 4 ? '00000000' : '10110100'}</text>`).join('');
c += [235.3, 279, 286.5, 381].map(y => P(`M611 ${y}H615.500`, 'none', '#f06020')).join('');
c += [312, 330, 337.5, 355.3, 388.5, 406.5].map(y => P(`M611 ${y}H615.500`, 'none', '#9070a0')).join('');
document.getElementById('canvas').innerHTML = c;
```
